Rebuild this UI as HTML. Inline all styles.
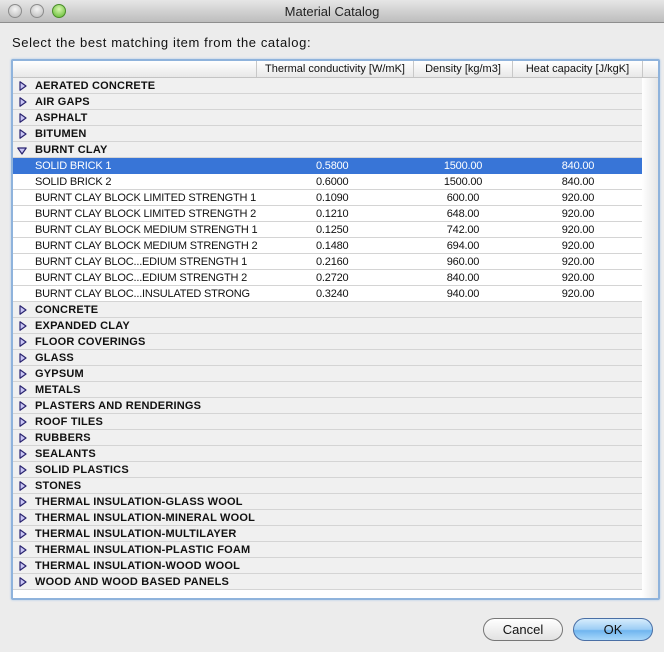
<!DOCTYPE html><html><head><style>
*{margin:0;padding:0;box-sizing:border-box}
body{width:664px;height:652px;background:#ececec;font-family:"Liberation Sans",sans-serif;position:relative;overflow:hidden}
.title{position:absolute;left:0;top:0;width:664px;height:23px;background:linear-gradient(#e6e6e6,#bdbdbd);border-bottom:1px solid #8e8e8e;text-align:center;font-size:13px;line-height:23px;color:#222}
.tl{position:absolute;top:4px;width:14px;height:14px;border-radius:50%;background:radial-gradient(circle at 50% 35%,#f4f4f4,#b8b8b8);border:1px solid #8c8c8c}
.prompt{position:absolute;left:12px;top:35px;font-size:13px;letter-spacing:0.6px;color:#111}
.frame{position:absolute;left:11px;top:59px;width:649px;height:541px;border:2px solid #8fb3dc;border-radius:2px;background:#fff;box-shadow:0 0 2px #a8c6e8}
.hdr{position:absolute;left:0;top:0;height:17px;width:645px;background:linear-gradient(#fff,#e8e8e8);border-bottom:1px solid #c4c4c4;font-size:11px;color:#111}
.hdr div{position:absolute;top:0;height:16px;line-height:16px;border-left:1px solid #c8c8c8;text-align:center}
.row{position:absolute;left:0;width:629px;height:16px;border-bottom:1px solid #d4d4d4;font-size:11px;line-height:16px;color:#111}
.g{background:#f0f0f0;font-weight:bold;letter-spacing:0.2px}
.c{background:#fff;letter-spacing:-0.2px}
.sel{background:#3875d7;color:#fff;border-bottom-color:#3875d7;letter-spacing:-0.2px}
.row span{position:absolute;top:0}
.n{left:22px}
.t{left:303px}.d{left:400px;width:100px;text-align:center}.h{left:515px;width:100px;text-align:center}
.row svg{position:absolute;left:6px;top:3px}
.gut{position:absolute;left:629px;top:17px;width:16px;height:520px;background:linear-gradient(90deg,#fff,#e6e6e6)}
.btn{position:absolute;top:618px;height:23px;border-radius:12px;border:1px solid #777;font-size:13px;text-align:center;line-height:21px;color:#111}
</style></head><body>
<svg width="0" height="0" style="position:absolute"><defs><symbol id="tr" viewBox="0 0 8 10"><path d="M1 0.8 L7 5 L1 9.2 Z" fill="#c9c6f4" stroke="#2a2470" stroke-width="1.2" stroke-linejoin="round"/></symbol><symbol id="td" viewBox="0 0 10 8"><path d="M0.8 1 L9.2 1 L5 7 Z" fill="#c9c6f4" stroke="#2a2470" stroke-width="1.2" stroke-linejoin="round"/></symbol></defs></svg>
<div class="title">Material Catalog
<div class="tl" style="left:8px"></div><div class="tl" style="left:30px"></div><div class="tl" style="left:52px;background:radial-gradient(circle at 50% 35%,#d8f7b0,#5cb82a);border-color:#4a8c2a"></div></div>
<div class="prompt">Select the best matching item from the catalog:</div>
<div class="frame">
<div class="hdr"><div style="left:243px;width:157px">Thermal conductivity [W/mK]</div><div style="left:400px;width:99px">Density [kg/m3]</div><div style="left:499px;width:130px">Heat capacity [J/kgK]</div><div style="left:629px;width:16px"></div></div>
<div class="gut"></div>
<div class="row g" style="top:17px"><svg width="8" height="10"><use href="#tr"/></svg><span class="n">AERATED CONCRETE</span></div>
<div class="row g" style="top:33px"><svg width="8" height="10"><use href="#tr"/></svg><span class="n">AIR GAPS</span></div>
<div class="row g" style="top:49px"><svg width="8" height="10"><use href="#tr"/></svg><span class="n">ASPHALT</span></div>
<div class="row g" style="top:65px"><svg width="8" height="10"><use href="#tr"/></svg><span class="n">BITUMEN</span></div>
<div class="row g" style="top:81px"><svg width="10" height="8" style="left:4px;top:5px"><use href="#td"/></svg><span class="n">BURNT CLAY</span></div>
<div class="row sel" style="top:97px"><span class="n">SOLID BRICK 1</span><span class="t">0.5800</span><span class="d">1500.00</span><span class="h">840.00</span></div>
<div class="row c" style="top:113px"><span class="n">SOLID BRICK 2</span><span class="t">0.6000</span><span class="d">1500.00</span><span class="h">840.00</span></div>
<div class="row c" style="top:129px"><span class="n">BURNT CLAY BLOCK LIMITED STRENGTH 1</span><span class="t">0.1090</span><span class="d">600.00</span><span class="h">920.00</span></div>
<div class="row c" style="top:145px"><span class="n">BURNT CLAY BLOCK LIMITED STRENGTH 2</span><span class="t">0.1210</span><span class="d">648.00</span><span class="h">920.00</span></div>
<div class="row c" style="top:161px"><span class="n">BURNT CLAY BLOCK MEDIUM STRENGTH 1</span><span class="t">0.1250</span><span class="d">742.00</span><span class="h">920.00</span></div>
<div class="row c" style="top:177px"><span class="n">BURNT CLAY BLOCK MEDIUM STRENGTH 2</span><span class="t">0.1480</span><span class="d">694.00</span><span class="h">920.00</span></div>
<div class="row c" style="top:193px"><span class="n">BURNT CLAY BLOC...EDIUM STRENGTH 1</span><span class="t">0.2160</span><span class="d">960.00</span><span class="h">920.00</span></div>
<div class="row c" style="top:209px"><span class="n">BURNT CLAY BLOC...EDIUM STRENGTH 2</span><span class="t">0.2720</span><span class="d">840.00</span><span class="h">920.00</span></div>
<div class="row c" style="top:225px"><span class="n">BURNT CLAY BLOC...INSULATED STRONG</span><span class="t">0.3240</span><span class="d">940.00</span><span class="h">920.00</span></div>
<div class="row g" style="top:241px"><svg width="8" height="10"><use href="#tr"/></svg><span class="n">CONCRETE</span></div>
<div class="row g" style="top:257px"><svg width="8" height="10"><use href="#tr"/></svg><span class="n">EXPANDED CLAY</span></div>
<div class="row g" style="top:273px"><svg width="8" height="10"><use href="#tr"/></svg><span class="n">FLOOR COVERINGS</span></div>
<div class="row g" style="top:289px"><svg width="8" height="10"><use href="#tr"/></svg><span class="n">GLASS</span></div>
<div class="row g" style="top:305px"><svg width="8" height="10"><use href="#tr"/></svg><span class="n">GYPSUM</span></div>
<div class="row g" style="top:321px"><svg width="8" height="10"><use href="#tr"/></svg><span class="n">METALS</span></div>
<div class="row g" style="top:337px"><svg width="8" height="10"><use href="#tr"/></svg><span class="n">PLASTERS AND RENDERINGS</span></div>
<div class="row g" style="top:353px"><svg width="8" height="10"><use href="#tr"/></svg><span class="n">ROOF TILES</span></div>
<div class="row g" style="top:369px"><svg width="8" height="10"><use href="#tr"/></svg><span class="n">RUBBERS</span></div>
<div class="row g" style="top:385px"><svg width="8" height="10"><use href="#tr"/></svg><span class="n">SEALANTS</span></div>
<div class="row g" style="top:401px"><svg width="8" height="10"><use href="#tr"/></svg><span class="n">SOLID PLASTICS</span></div>
<div class="row g" style="top:417px"><svg width="8" height="10"><use href="#tr"/></svg><span class="n">STONES</span></div>
<div class="row g" style="top:433px"><svg width="8" height="10"><use href="#tr"/></svg><span class="n">THERMAL INSULATION-GLASS WOOL</span></div>
<div class="row g" style="top:449px"><svg width="8" height="10"><use href="#tr"/></svg><span class="n">THERMAL INSULATION-MINERAL WOOL</span></div>
<div class="row g" style="top:465px"><svg width="8" height="10"><use href="#tr"/></svg><span class="n">THERMAL INSULATION-MULTILAYER</span></div>
<div class="row g" style="top:481px"><svg width="8" height="10"><use href="#tr"/></svg><span class="n">THERMAL INSULATION-PLASTIC FOAM</span></div>
<div class="row g" style="top:497px"><svg width="8" height="10"><use href="#tr"/></svg><span class="n">THERMAL INSULATION-WOOD WOOL</span></div>
<div class="row g" style="top:513px"><svg width="8" height="10"><use href="#tr"/></svg><span class="n">WOOD AND WOOD BASED PANELS</span></div>
</div>
<div class="btn" style="left:483px;width:80px;background:linear-gradient(#fff,#f0f0f0 50%,#e2e2e2)">Cancel</div>
<div class="btn" style="left:573px;width:80px;border-color:#4a6fa5;background:linear-gradient(#d7ecfc,#9ccdf5 50%,#6fb5ef 55%,#a8d8fa)">OK</div>
</body></html>
